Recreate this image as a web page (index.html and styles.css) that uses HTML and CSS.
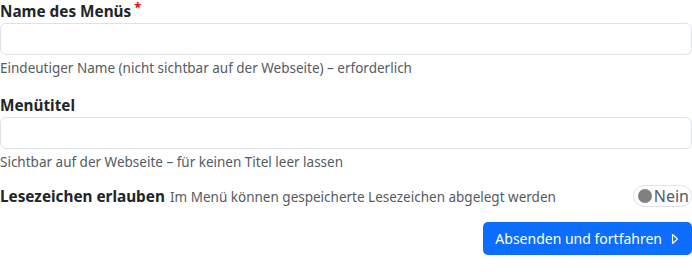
FILE: index.html
```html
<!DOCTYPE html>
<html lang="de">
<head>
    <meta charset="UTF-8">
    <meta name="viewport" content="width=device-width, initial-scale=1.0">
    <title>Menü anlegen</title>
    <link rel="stylesheet" href="styles.css">
</head>
<body>
    <form class="menu-form">
        <div class="field">
            <label for="menuName">Name des Menüs<span class="req">*</span></label>
            <input type="text" id="menuName" name="menuName" required>
            <div class="help">Eindeutiger Name (nicht sichtbar auf der Webseite) – erforderlich</div>
        </div>

        <div class="field">
            <label for="menuTitle">Menütitel</label>
            <input type="text" id="menuTitle" name="menuTitle">
            <div class="help">Sichtbar auf der Webseite – für keinen Titel leer lassen</div>
        </div>

        <div class="switch-row">
            <div>
                <span class="switch-label">Lesezeichen erlauben</span>
                <span class="switch-help">Im Menü können gespeicherte Lesezeichen abgelegt werden</span>
            </div>
            <button type="button" class="toggle"><span class="knob"></span>Nein</button>
        </div>

        <div class="actions">
            <button type="submit" class="submit">Absenden und fortfahren
                <svg width="10" height="12" viewBox="0 0 10 12"><path d="M2.5 1.5 L7.5 6 L2.5 10.5 Z" fill="none" stroke="#fff" stroke-width="1.1" stroke-linejoin="round"/></svg>
            </button>
        </div>
    </form>
</body>
</html>
```

FILE: styles.css
```css
body { margin: 0; font-family: "Noto Sans", sans-serif; color: #212529; background: #fff; }
.menu-form { display: flex; flex-direction: column; padding-top: 1px; }
.field { margin-bottom: 18px; }
.field + .field { margin-bottom: 14px; }
.field label { display: block; font-weight: bold; font-size: 15.3px; line-height: 20px; margin-bottom: 2px; }
.req { color: #e00; font-size: 13px; line-height: 1; vertical-align: 5px; margin-left: 3px; }
.field input { display: block; width: 100%; box-sizing: border-box; height: 32px; border: 1px solid #dee2e6; border-radius: 6px; padding: 4px 8px; font: inherit; }
.help { font-size: 13.5px; line-height: 18px; color: #555b61; margin-top: 4px; }
.switch-row { display: flex; justify-content: space-between; align-items: center; }
.switch-label { font-weight: bold; font-size: 15.3px; }
.switch-help { font-size: 13.5px; color: #555b61; margin-left: 1px; }
.toggle { display: flex; align-items: center; gap: 2px; height: 22px; padding: 0 2px 0 4px; border: 1px solid #dee2e6; border-radius: 11px; background: #fff; font: inherit; font-size: 16px; color: #555b61; }
.knob { width: 14px; height: 14px; border-radius: 50%; background: #808080; }
.actions { display: flex; justify-content: flex-end; margin-top: 15px; }
.submit { display: flex; align-items: center; gap: 8px; height: 33px; padding: 0 12px; background: #0d6efd; color: #fff; border: none; border-radius: 5px; font: inherit; font-size: 14px; }
```
